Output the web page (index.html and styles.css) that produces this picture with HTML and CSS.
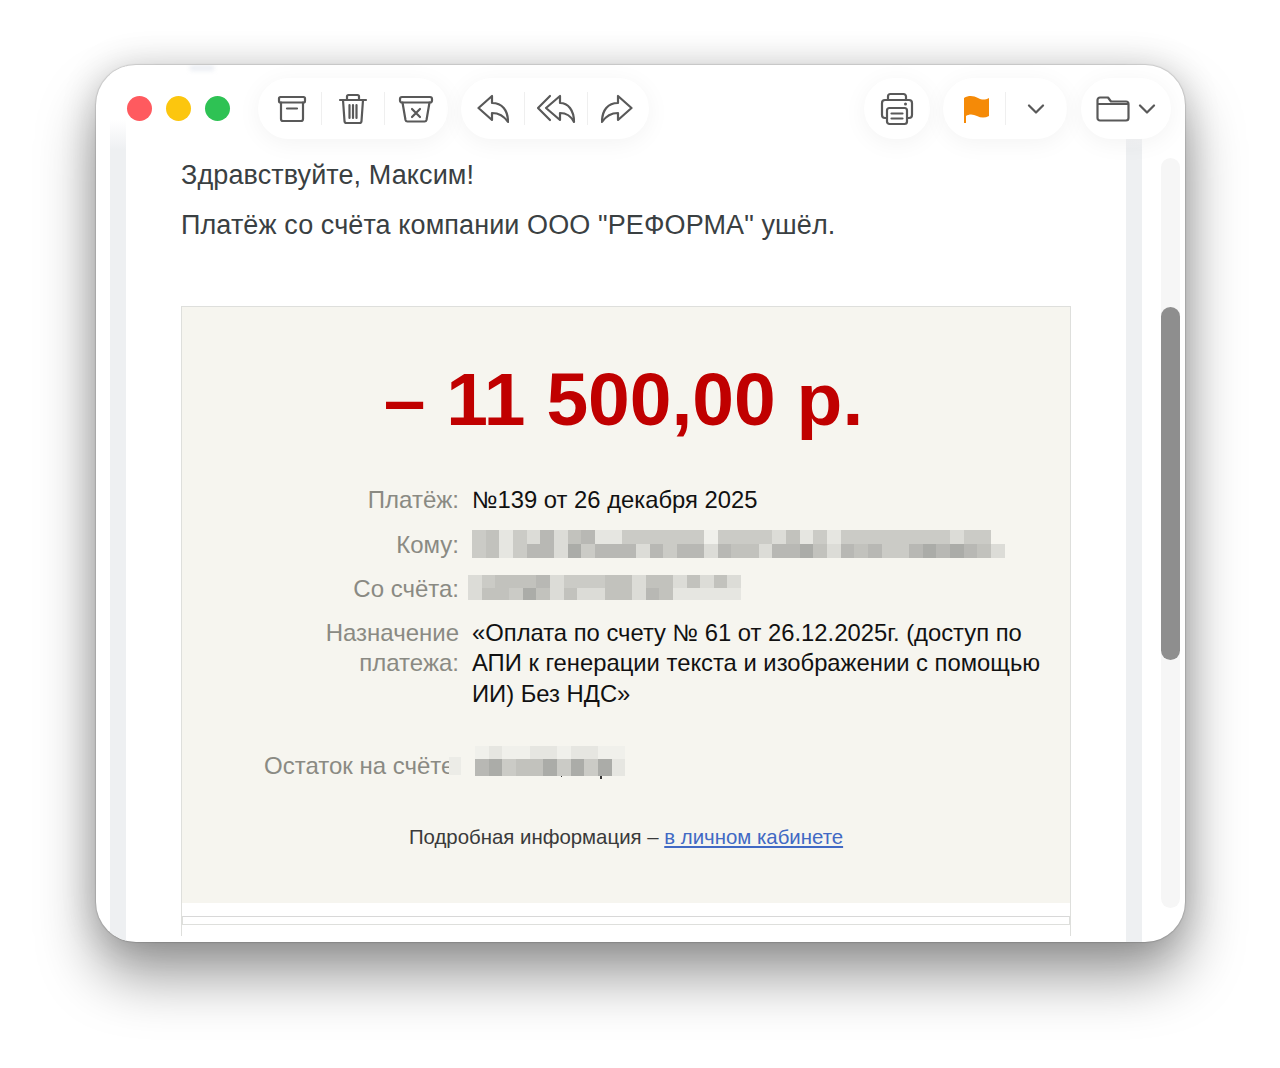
FILE: index.html
```html
<!DOCTYPE html>
<html lang="ru">
<head>
    <meta charset="UTF-8">
    <meta name="viewport" content="width=device-width, initial-scale=1.0">
    <title>Платёж</title>
    <link rel="stylesheet" href="styles.css">
</head>
<body>
    <div class="window">
        <div class="smudge"></div>
        <div class="toolbar">
            <div class="lights">
                <span class="light red"></span>
                <span class="light yellow"></span>
                <span class="light green"></span>
            </div>
            <div class="pill mail-tools">
                <div class="tool">
                    <svg width="32" height="32" viewBox="0 0 32 32"><rect x="3" y="4" width="26" height="5.5" rx="1.5"/><path d="M5 9.5V26a2 2 0 0 0 2 2h18a2 2 0 0 0 2-2V9.5"/><path d="M11 15.5h10"/></svg>
                </div>
                <div class="tool">
                    <svg width="32" height="32" viewBox="0 0 32 32"><path d="M3 7h26M10 7V3.5a1.5 1.5 0 0 1 1.5-1.5h9A1.500 1.500 0 0 1 22 3.5V7"/><path d="M6 7l1.5 21a2 2 0 0 0 2 2h13a2 2 0 0 0 2-2L26 7"/><path d="M12.500 12v13M16 12v13M19.500 12v13"/></svg>
                </div>
                <div class="tool">
                    <svg width="36" height="32" viewBox="0 0 36 32"><rect x="2" y="4" width="32" height="5.500" rx="2"/><path d="M4.500 9.500L7.500 27a2 2 0 0 0 2 1.500h17a2 2 0 0 0 2-1.500l3-17.500"/><path d="M14 16l8 8M22 16l-8 8"/></svg>
                </div>
            </div>
            <div class="pill reply-tools">
                <div class="tool">
                    <svg width="32" height="32" viewBox="0 0 32 32"><path d="M1.500 15L15 3v7c10 0 16 7 16 19-4-6-9-9-16-9v7z"/></svg>
                </div>
                <div class="tool">
                    <svg width="40" height="32" viewBox="0 0 40 32"><path d="M14 3L2 15l12 12"/><path d="M10 15L24 3v7c8 0 14 7 14 19-3-6-8-9-14-9v7z"/></svg>
                </div>
                <div class="tool">
                    <svg width="32" height="32" viewBox="0 0 32 32"><path d="M30.500 15L17 3v7C7 10 1 17 1 29c4-6 9-9 16-9v7z"/></svg>
                </div>
            </div>
            <div class="pill print">
                <div class="tool">
                    <svg width="34" height="34" viewBox="0 0 34 34"><path d="M8 8V4.500A2.500 2.500 0 0 1 10.500 2h13A2.500 2.500 0 0 1 26 4.500V8"/><path d="M7 26H5a3 3 0 0 1-3-3V11a3 3 0 0 1 3-3h24a3 3 0 0 1 3 3v12a3 3 0 0 1-3 3h-2"/><rect x="7" y="16" width="20" height="16" rx="2.500"/><path d="M11.500 21.500h11M11.500 26.500h11"/><circle class="dot" cx="25.500" cy="12" r="1.500"/></svg>
                </div>
            </div>
            <div class="pill flags">
                <div class="tool">
                    <svg class="flag" width="26" height="28" viewBox="0 0 26 28"><path d="M0 3C5 0 10 1 14 3c4 2 7 2 11 0v18c-4 2-8 2-12 0-4-2-8-2-11 0v7H0z"/></svg>
                </div>
                <div class="tool">
                    <svg class="chevron" width="18" height="10" viewBox="0 0 18 10"><path d="M2 1.500l7 7 7-7"/></svg>
                </div>
            </div>
            <div class="pill folder">
                <svg width="34" height="28" viewBox="0 0 34 28"><path d="M1.500 5A2.500 2.500 0 0 1 4 2.500h8l3 4h15A2.500 2.500 0 0 1 32.500 9v14a2.500 2.500 0 0 1-2.500 2.500H4A2.500 2.500 0 0 1 1.500 23z"/><path d="M2 9h30"/></svg>
                <svg class="chevron" width="18" height="10" viewBox="0 0 18 10"><path d="M2 1.500l7 7 7-7"/></svg>
            </div>
        </div>
        <div class="gutter"></div>
        <div class="strip"></div>
        <div class="message">
            <p class="greeting">Здравствуйте, Максим!</p>
            <p class="lead">Платёж со счёта компании ООО "РЕФОРМА" ушёл.</p>
            <div class="frame">
                <div class="summary">
                    <div class="amount">– 11 500,00 р.</div>
                    <div class="details">
                        <div class="label">Платёж:</div>
                        <div class="value">№139 от 26 декабря 2025</div>
                        <div class="label">Кому:</div>
                        <div class="value"><div class="pixels to" data-rows="34132524511333333033332413133333333233|341355263555253552544255642545335656542"></div></div>
                        <div class="label">Со счёта:</div>
                        <div class="value"><div class="pixels from" data-rows="23444523334424424242|24436424224425411111"></div></div>
                        <div class="label purpose">Назначение<br>платежа:</div>
                        <div class="value purpose">«Оплата по счету № 61 от 26.12.2025г. (доступ по АПИ к генерации текста и изображении с помощью ИИ) Без НДС»</div>
                    </div>
                    <div class="balance">
                        <div class="balance-label"><span>Остаток на счёте</span><i></i></div>
                        <div class="pixels rest" data-rows="01001101100|56344636361"></div>
                    </div>
                    <div class="more">Подробная информация – <a href="#">в личном кабинете</a></div>
                </div>
                <div class="footer-box"></div>
            </div>
        </div>
        <div class="strip"></div>
        <div class="scroll">
            <div class="track"><div class="thumb"></div></div>
        </div>
    </div>
    <script src="pixels.js"></script>
</body>
</html>
```

FILE: styles.css
```css
* {
    box-sizing: border-box;
}
html, body {
    height: 100%;
}
body {
    margin: 0;
    padding: 65px 95px 126px 96px;
    background-color: #fff;
    font-family: 'Liberation Sans', Arial, sans-serif;
    overflow: hidden;
}
.window {
    position: relative;
    display: flex;
    height: 877px;
    background-color: #fff;
    border-radius: 40px;
    overflow: hidden;
    box-shadow: 0 34px 58px rgba(0, 0, 0, 0.4), 0 0 36px rgba(0, 0, 0, 0.16), 0 0 1px 1px rgba(0, 0, 0, 0.12);
}
.smudge {
    position: absolute;
    top: 0;
    left: 94px;
    width: 24px;
    height: 6px;
    background-color: #eceff4;
    filter: blur(2px);
}

/* toolbar */
.toolbar {
    position: absolute;
    top: 13px;
    left: 31px;
    right: 14px;
    display: flex;
    align-items: center;
    gap: 13px;
}
.lights {
    display: flex;
    gap: 14px;
    margin-right: 15px;
}
.light {
    width: 25px;
    height: 25px;
    border-radius: 50%;
}
.red { background-color: #ff5a5f; }
.yellow { background-color: #fcc60e; }
.green { background-color: #2ec254; }
.pill {
    display: flex;
    align-items: center;
    height: 61px;
    background-color: #fff;
    border-radius: 31px;
    box-shadow: 0 4px 24px rgba(0, 0, 0, 0.05);
}
.print {
    margin-left: auto;
}
.folder {
    width: 90px;
    margin-left: 1px;
    justify-content: center;
    gap: 8px;
}
.tool {
    position: relative;
    display: flex;
    align-items: center;
    justify-content: center;
    width: 63px;
    height: 61px;
}
.mail-tools .tool:first-child {
    padding-left: 5px;
}
.mail-tools .tool:last-child {
    width: 64px;
}
.reply-tools .tool:first-child {
    padding-left: 1px;
}
.reply-tools .tool:last-child {
    width: 62px;
    padding-right: 2px;
}
.print .tool {
    width: 66px;
}
.flags .tool {
    width: 62px;
}
.tool + .tool::before {
    content: '';
    position: absolute;
    left: 0;
    top: 14px;
    bottom: 14px;
    width: 1px;
    background-color: #efefef;
}
.pill svg {
    fill: none;
    stroke: #595959;
    stroke-width: 2.2;
    stroke-linejoin: round;
    stroke-linecap: round;
}
.pill .flag {
    margin-left: 6px;
    fill: #f58a07;
    stroke: none;
}
.pill .dot {
    fill: #595959;
    stroke: none;
}

/* side columns */
.gutter {
    width: 14px;
    flex: none;
}
.strip {
    width: 16px;
    flex: none;
    background: linear-gradient(#fff 55px, #eef0f2 85px);
}
.message {
    width: 1000px;
    flex: none;
    padding: 95px 55px 0;
    color: #3a4042;
}
.greeting, .lead {
    margin: 0;
    font-size: 27px;
    letter-spacing: 0.1px;
    line-height: 30px;
}
.lead {
    margin-top: 20px;
}
.scroll {
    flex: 1;
    padding: 93px 5px 34px 19px;
}
.track {
    height: 100%;
    background-color: #f6f6f6;
    border-radius: 10px;
}
.thumb {
    position: relative;
    top: 149px;
    height: 353px;
    background-color: #8e8e8e;
    border-radius: 10px;
}

/* payment card */
.frame {
    height: 630px;
    margin-top: 66px;
    border: 1px solid #dedfdc;
    border-bottom: none;
}
.summary {
    height: 596px;
    padding-top: 52px;
    background-color: #f6f5ef;
}
.amount {
    height: 80px;
    padding-right: 5px;
    font-size: 75px;
    font-weight: bold;
    line-height: 80px;
    text-align: center;
    color: #c00000;
}
.details {
    display: grid;
    grid-template-columns: 277px 1fr;
    column-gap: 13px;
    row-gap: 14px;
    margin-top: 46px;
    padding-right: 24px;
    font-size: 23.8px;
    line-height: 30.5px;
}
.label {
    text-align: right;
    font-size: 24px;
    color: #8a8a83;
}
.value {
    color: #111;
}
.purpose {
    margin-top: -1px;
}
.pixels {
    display: flex;
    flex-direction: column;
    filter: blur(0.7px);
}
.pixel-row {
    display: flex;
}
.pixel-row span {
    width: 13.66px;
    height: 14px;
    flex: none;
}
.from {
    margin: 1px 0 0 -4px;
}
.from .pixel-row span {
    height: 12.5px;
}
.s0 { background-color: #f0f0eb; }
.s1 { background-color: #e6e6e1; }
.s2 { background-color: #dcdcd7; }
.s3 { background-color: #cbcbc6; }
.s4 { background-color: #c2c2bd; }
.s5 { background-color: #b8b8b4; }
.s6 { background-color: #abaca8; }
.balance {
    display: flex;
    align-items: center;
    margin-top: 42px;
    height: 30px;
    padding-left: 82px;
    font-size: 24px;
    color: #8a8a83;
}
.balance-label {
    position: relative;
    width: 197px;
    white-space: nowrap;
}
/* blurred piece lying over the end of the label */
.balance-label i {
    position: absolute;
    top: 5px;
    left: 185px;
    width: 12px;
    height: 18px;
    background-color: #ecece7;
}
.rest {
    position: relative;
    margin: -10px 0 0 14px;
}
.rest .pixel-row:first-child span {
    height: 13px;
}
.rest .pixel-row:last-child span {
    height: 17px;
}
.rest::before, .rest::after {
    content: '';
    position: absolute;
    top: 30px;
    background-color: #333;
}
.rest::before {
    left: 86px;
    width: 1px;
    height: 1px;
}
.rest::after {
    left: 125px;
    width: 2px;
    height: 3px;
}
.more {
    margin-top: 41px;
    font-size: 20.4px;
    line-height: 30px;
    text-align: center;
    color: #3a3a3a;
}
.more a {
    color: #4169c4;
}
.footer-box {
    height: 9px;
    margin-top: 13px;
    border: 1px solid #dedfdc;
    border-top-color: #d8d8d8;
}
```

FILE: pixels.js
```js
// fill the blurred blocks from their shade strings
document.querySelectorAll('.pixels').forEach(function(block) {
    block.dataset.rows.split('|').forEach(function(row) {
        const line = document.createElement('div');
        line.className = 'pixel-row';
        row.split('').forEach(function(shade) {
            const cell = document.createElement('span');
            cell.className = 's' + shade;
            line.appendChild(cell);
        });
        block.appendChild(line);
    });
});
```
